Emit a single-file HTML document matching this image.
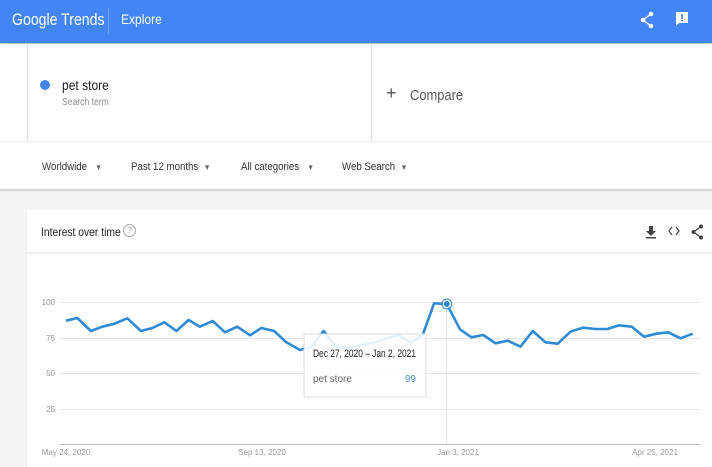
<!DOCTYPE html>
<html><head><style>
*{margin:0;padding:0;box-sizing:border-box}
body{width:712px;height:467px;overflow:hidden;background:#f4f4f4;font-family:"Liberation Sans",Arial,sans-serif;position:relative}
.hdr{position:absolute;left:0;top:0;width:712px;height:43px;background:#4285f4;box-shadow:0 1px 3px rgba(0,0,0,.3)}
.abs{position:absolute}
.n{transform:scaleX(0.86);transform-origin:0 0;white-space:nowrap}
.search{position:absolute;left:0;top:44px;width:712px;height:97px;background:#fff}
.filters{position:absolute;left:0;top:141px;width:712px;height:50px;background:#fff;border-top:1px solid #eee;border-bottom:2px solid #d6d6d6}
.f{position:absolute;top:19px;font-size:11px;color:#333;transform:scaleX(0.88);transform-origin:0 0;white-space:nowrap}
.card{position:absolute;left:27px;top:210px;width:685px;height:257px;background:#fff;box-shadow:0 1px 2px rgba(0,0,0,.08)}
</style></head><body>
<div class="hdr">
  <div class="abs n" style="left:12px;top:10px;color:#fff;font-size:17px;transform:scaleX(0.83)">Google Trends</div>
  <div class="abs" style="left:108px;top:8px;width:1px;height:26px;background:rgba(255,255,255,.25)"></div>
  <div class="abs n" style="left:121px;top:11px;color:#fff;font-size:14px">Explore</div>
  <svg class="abs" style="left:640px;top:11px" width="14" height="18" viewBox="0 0 14 18"><circle cx="11" cy="3" r="2.3" fill="#fff"/><circle cx="3" cy="9" r="2.3" fill="#fff"/><circle cx="11" cy="15" r="2.3" fill="#fff"/><path d="M11 3L3 9L11 15" stroke="#fff" stroke-width="1.4" fill="none"/></svg>
  <svg class="abs" style="left:675px;top:11px" width="14" height="16" viewBox="0 0 14 16"><path d="M1 1H13V12H4L1 15Z" fill="#fff"/><rect x="6.3" y="3" width="1.6" height="5" fill="#4285f4"/><rect x="6.3" y="9" width="1.6" height="1.6" fill="#4285f4"/></svg>
</div>
<div class="search">
  <div class="abs" style="left:27px;top:0;width:1px;height:97px;background:#e0e0e0"></div>
  <div class="abs" style="left:371px;top:0;width:1px;height:97px;background:#e0e0e0"></div>
  <div class="abs" style="left:40px;top:36px;width:10px;height:10px;border-radius:50%;background:#4285f4"></div>
  <div class="abs n" style="left:62px;top:33px;font-size:14px;color:#222">pet store</div>
  <div class="abs n" style="left:62px;top:53px;font-size:10px;color:#888">Search term</div>
  <div class="abs" style="left:386px;top:41px;font-size:18px;color:#555;line-height:16px">+</div>
  <div class="abs n" style="left:410px;top:43px;font-size:15px;color:#555">Compare</div>
</div>
<div class="filters">
  <div class="f" style="left:42px">Worldwide &nbsp;&nbsp;<span style="font-size:8px;color:#666">▼</span></div>
  <div class="f" style="left:131px">Past 12 months &nbsp;<span style="font-size:8px;color:#666">▼</span></div>
  <div class="f" style="left:241px">All categories &nbsp;&nbsp;<span style="font-size:8px;color:#666">▼</span></div>
  <div class="f" style="left:342px">Web Search &nbsp;<span style="font-size:8px;color:#666">▼</span></div>
</div>
<div class="card">
  <div class="abs n" style="left:14px;top:15px;font-size:12px;color:#222">Interest over time</div>
  <div class="abs" style="left:96px;top:14px;width:13px;height:13px;border:1px solid #aaa;border-radius:50%;font-size:9px;color:#aaa;text-align:center;line-height:11px">?</div>
  <svg class="abs" style="left:617px;top:15px" width="14" height="14" viewBox="0 0 14 14"><path d="M5 1H9V6H12L7 11L2 6H5Z" fill="#444"/><rect x="2" y="12" width="10" height="1.5" fill="#444"/></svg>
  <svg class="abs" style="left:641px;top:16px" width="12" height="10" viewBox="0 0 12 10"><path d="M4 1L1 5L4 9M8 1L11 5L8 9" stroke="#444" stroke-width="1.2" fill="none"/></svg>
  <svg class="abs" style="left:664px;top:14px" width="12" height="16" viewBox="0 0 12 16"><circle cx="10" cy="2.5" r="2" fill="#444"/><circle cx="2.5" cy="8" r="2" fill="#444"/><circle cx="10" cy="13.5" r="2" fill="#444"/><path d="M10 2.5L2.5 8L10 13.5" stroke="#444" stroke-width="1.3" fill="none"/></svg>
  <div class="abs" style="left:0;top:42px;width:685px;height:2px;background:#eee"></div>
</div>
<svg class="abs" style="left:0;top:0" width="712" height="467" viewBox="0 0 712 467">
  <g stroke="#e6e6e6" stroke-width="1">
    <line x1="60" y1="302.5" x2="700" y2="302.5"/><line x1="60" y1="338.5" x2="700" y2="338.5"/>
    <line x1="60" y1="373.5" x2="700" y2="373.5"/><line x1="60" y1="409.5" x2="700" y2="409.5"/>
  </g>
  <line x1="60" y1="444.5" x2="700" y2="444.5" stroke="#bbb"/>
  <line x1="446.5" y1="302" x2="446.5" y2="444" stroke="#e4e4e4"/>
  <g font-size="8" fill="#999" font-family="Liberation Sans,sans-serif">
    <text x="55" y="305" text-anchor="end">100</text><text x="55" y="341" text-anchor="end">75</text>
    <text x="55" y="376" text-anchor="end">50</text><text x="55" y="412" text-anchor="end">25</text>
    <text x="66" y="455" text-anchor="middle">May 24, 2020</text><text x="262" y="455" text-anchor="middle">Sep 13, 2020</text>
    <text x="458" y="455" text-anchor="middle">Jan 3, 2021</text><text x="655" y="455" text-anchor="middle">Apr 25, 2021</text>
  </g>
  <polyline fill="none" stroke="#2f8ad6" stroke-width="2.6" stroke-linejoin="round" points="65.9,320.7 77.3,318 90.9,331 102.3,326.7 113.6,324 127.3,318.3 140.9,331 152.3,328 164.5,322.3 176.4,331 188.6,320 200,326.7 212.7,321 225,332.3 237.3,326.7 250,335.3 261.4,328 274.1,331 286.4,342.3 300,350 311.4,346.7 323.6,331 336.4,346.7 348.6,348.3 361.4,345 373.6,342.7 386.4,338.3 398.6,335 411.4,342.7 422.7,335 434.1,303.3 446.8,304 460,329.3 471.4,337.3 483.2,335 495.5,343.3 507.7,340.7 520.5,346.7 532.7,331 545.5,342.3 557.7,343.7 570.5,331.7 582.7,327.7 595.5,329 607.3,329 619.1,325.3 631.8,326.7 644.1,336.7 656.4,333.7 668.2,332.3 680.5,338.3 692.7,333.7"/>
  <circle cx="446.8" cy="304" r="3.5" fill="#2f8ad6" stroke="#fff" stroke-width="1"/>
  <circle cx="446.8" cy="304" r="5" fill="none" stroke="#2f8ad6" stroke-width="1"/>
  <rect x="304" y="334" width="122" height="63" fill="#fff" fill-opacity="0.88" stroke="#ddd"/>
  <text x="313" y="357" font-size="11" fill="#222" font-family="Liberation Sans,sans-serif" textLength="103" lengthAdjust="spacingAndGlyphs">Dec 27, 2020 – Jan 2, 2021</text>
  <text x="313" y="382" font-size="10" fill="#666" font-family="Liberation Sans,sans-serif">pet store</text>
  <text x="416" y="382" font-size="10" fill="#4a8ccc" text-anchor="end" font-family="Liberation Sans,sans-serif">99</text>
</svg>
</body></html>
